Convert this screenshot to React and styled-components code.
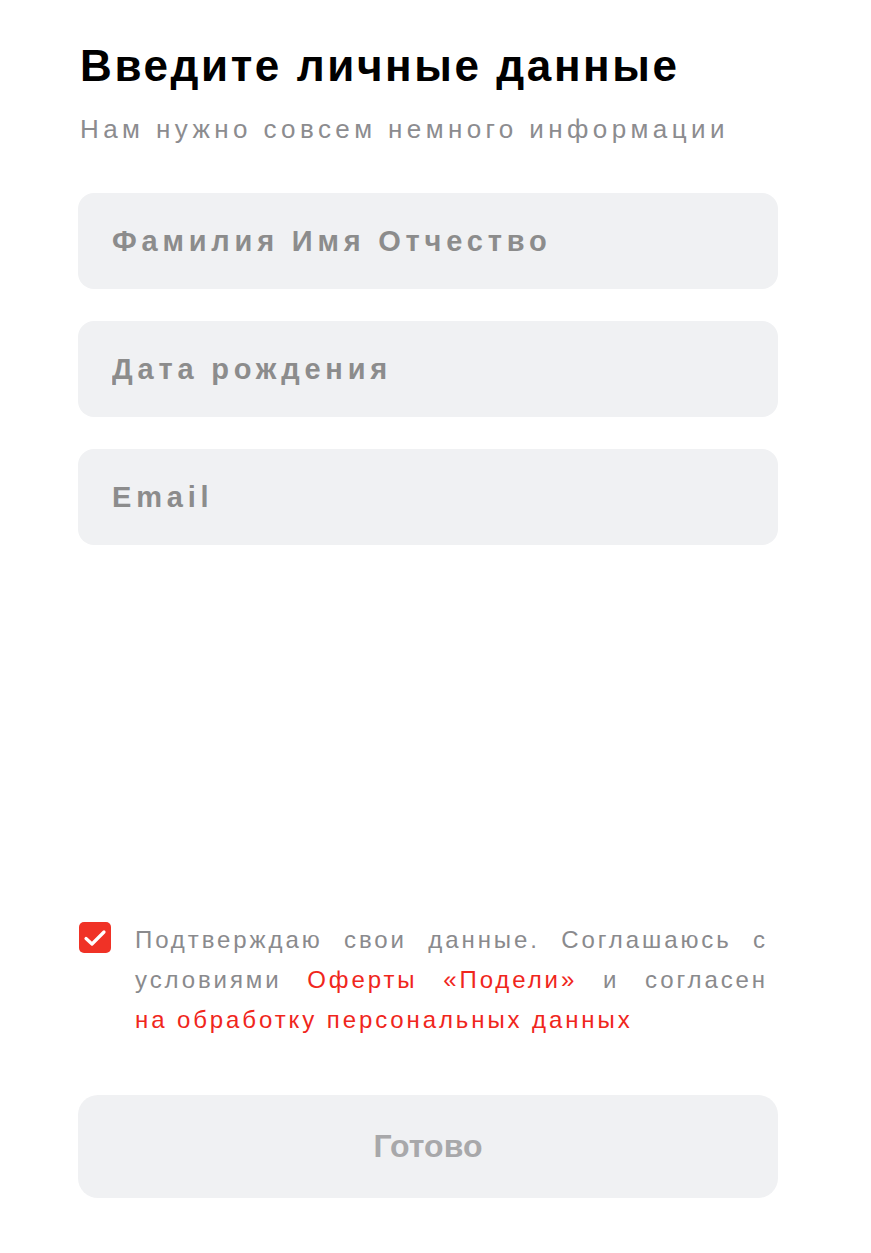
import React, { useState } from "react";
import styled, { createGlobalStyle } from "styled-components";

const GlobalStyle = createGlobalStyle`
  html, body {
    margin: 0;
    padding: 0;
    background: #fff;
  }
  body {
    font-family: "Liberation Sans", Arial, sans-serif;
  }
`;

const App = () => {
  const [agreed, setAgreed] = useState(true);

  return (
    <>
      <GlobalStyle />
      <Page>
        <Header>
          <Title>Введите личные данные</Title>
          <Subtitle>Нам нужно совсем немного информации</Subtitle>
        </Header>

        <Fields>
          <Field placeholder="Фамилия Имя Отчество" />
          <Field placeholder="Дата рождения" />
          <Field placeholder="Email" type="email" />
        </Fields>

        <Consent>
          <CheckBox checked={agreed} onClick={() => setAgreed(!agreed)}>
            {agreed && (
              <svg width="24" height="20" viewBox="0 0 24 20" fill="none">
                <path d="M3 10.5 L9 16 L21 4" stroke="#fff" strokeWidth="3.2" strokeLinecap="round" strokeLinejoin="round" />
              </svg>
            )}
          </CheckBox>
          <ConsentText>
            Подтверждаю свои данные. Соглашаюсь с условиями <Link>Оферты «Подели»</Link> и согласен{" "}
            <Link nowrap>на обработку персональных данных</Link>
          </ConsentText>
        </Consent>

        <SubmitButton disabled={!agreed}>Готово</SubmitButton>
      </Page>
    </>
  );
};

const Page = styled.div`
  width: 778px;
  height: 1253px;
  box-sizing: border-box;
  padding: 40px 0 55px 78px;
  display: flex;
  flex-direction: column;
`;

const Header = styled.div`
  display: flex;
  flex-direction: column;
  gap: 21px;
  padding-left: 2px;
`;

const Title = styled.h1`
  margin: 0;
  font-size: 44px;
  line-height: 52px;
  font-weight: 700;
  color: #000;
  letter-spacing: 2.6px;
`;

const Subtitle = styled.p`
  margin: 0;
  font-size: 26px;
  line-height: 32px;
  color: #8c8c8f;
  letter-spacing: 4.4px;
`;

const Fields = styled.div`
  display: flex;
  flex-direction: column;
  gap: 32px;
  margin-top: 48px;
`;

const Field = styled.input`
  width: 700px;
  height: 96px;
  box-sizing: border-box;
  border: none;
  outline: none;
  border-radius: 16px;
  background: #f0f1f3;
  padding: 0 34px;
  font-family: inherit;
  font-size: 29px;
  font-weight: 700;
  letter-spacing: 4.8px;
  color: #333;

  &::placeholder {
    color: #8c8c8c;
  }
`;

const Consent = styled.div`
  margin-top: auto;
  display: flex;
  gap: 24px;
  align-items: flex-start;
  padding-right: 10px;
`;

const CheckBox = styled.div`
  flex: none;
  width: 32px;
  height: 31px;
  margin-top: 2px;
  margin-left: 1px;
  border-radius: 5px;
  background: ${(props) => (props.checked ? "#f03226" : "#fff")};
  border: ${(props) => (props.checked ? "none" : "2px solid #c8c8cc")};
  display: flex;
  align-items: center;
  justify-content: center;
  cursor: pointer;
`;

const ConsentText = styled.p`
  margin: 0;
  font-size: 24px;
  line-height: 40px;
  color: #8a8a8d;
  text-align: justify;
  letter-spacing: 2.9px;
`;

const Link = styled.span.withConfig({ shouldForwardProp: (prop) => prop !== "nowrap" })`
  color: #f0261c;
  white-space: ${(props) => (props.nowrap ? "nowrap" : "normal")};
`;

const SubmitButton = styled.button`
  margin-top: 55px;
  width: 700px;
  height: 103px;
  border: none;
  border-radius: 20px;
  background: #f0f1f3;
  font-family: inherit;
  font-size: 32px;
  font-weight: 700;
  color: #a8a8aa;
  cursor: pointer;
`;

export default App;
